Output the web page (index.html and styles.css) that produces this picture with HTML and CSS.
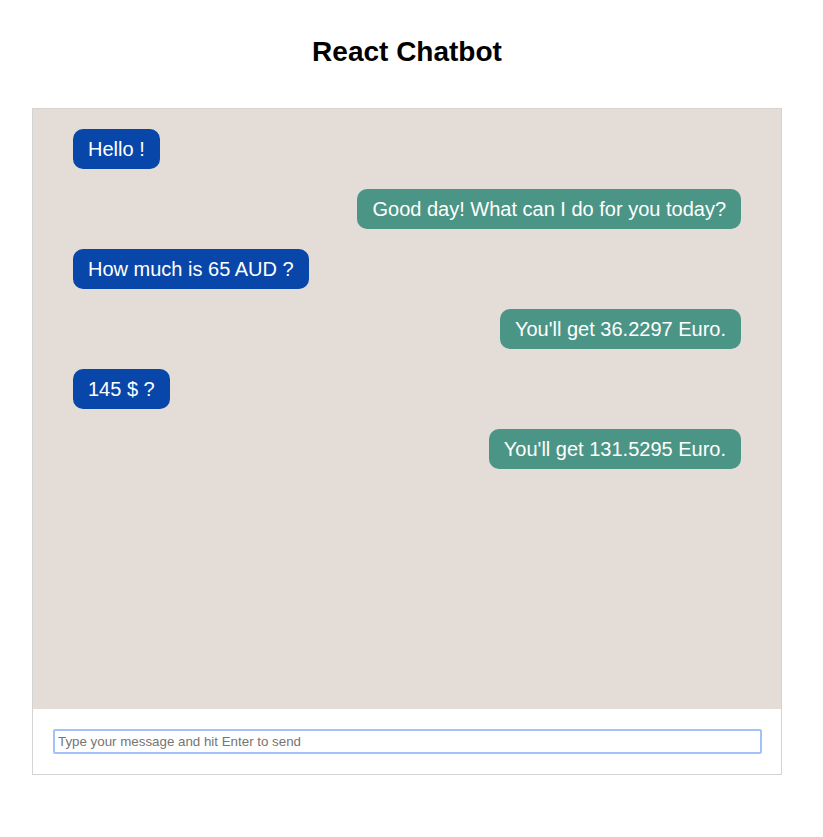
FILE: index.html
```html
<!DOCTYPE html>
<html>
<head>
<meta charset="utf-8">
<link rel="stylesheet" href="styles.css">
</head>
<body>
<h1 class="title">React Chatbot</h1>
<div class="chat">
  <div class="messages">
    <div class="msg user"><span class="bubble">Hello !</span></div>
    <div class="msg bot"><span class="bubble">Good day! What can I do for you today?</span></div>
    <div class="msg user"><span class="bubble">How much is 65 AUD ?</span></div>
    <div class="msg bot"><span class="bubble">You'll get 36.2297 Euro.</span></div>
    <div class="msg user"><span class="bubble">145 $ ?</span></div>
    <div class="msg bot"><span class="bubble">You'll get 131.5295 Euro.</span></div>
  </div>
  <div class="composer">
    <input class="input" type="text" autofocus placeholder="Type your message and hit Enter to send">
  </div>
</div>
</body>
</html>
```
FILE: styles.css
```css
html, body {
  margin: 0;
  padding: 0;
  background: #ffffff;
  font-family: "Liberation Sans", Arial, sans-serif;
}
body {
  padding: 0 41px 0 32px;
}
.title {
  margin: 0;
  padding-top: 36px;
  height: 108px;
  box-sizing: border-box;
  text-align: center;
  font-size: 28px;
  line-height: 32px;
  font-weight: bold;
  color: #000;
}
.chat {
  border: 1px solid #d3d3d3;
  width: 750px;
  box-sizing: border-box;
}
.messages {
  background: #e4dcd6;
  height: 600px;
  box-sizing: border-box;
  padding: 20px 40px;
  display: flex;
  flex-direction: column;
  gap: 20px;
}
.msg {
  display: flex;
}
.msg.bot {
  justify-content: flex-end;
}
.bubble {
  display: inline-block;
  font-size: 20px;
  line-height: 24px;
  padding: 8px 15px;
  border-radius: 10px;
  color: #ffffff;
}
.user .bubble {
  background: #0847a9;
}
.bot .bubble {
  background: #4b9586;
}
.composer {
  background: #ffffff;
  padding: 20px 19px 20px 20px;
}
.input {
  display: block;
  width: 100%;
  box-sizing: border-box;
  height: 25px;
  border: 2px solid #a3c1fb;
  border-radius: 2px;
  padding: 0 3px;
  font-family: "Liberation Sans", Arial, sans-serif;
  font-size: 13.333px;
  color: #333;
  caret-color: #000;
  outline: none;
}
.input::placeholder {
  color: #757575;
}
```
